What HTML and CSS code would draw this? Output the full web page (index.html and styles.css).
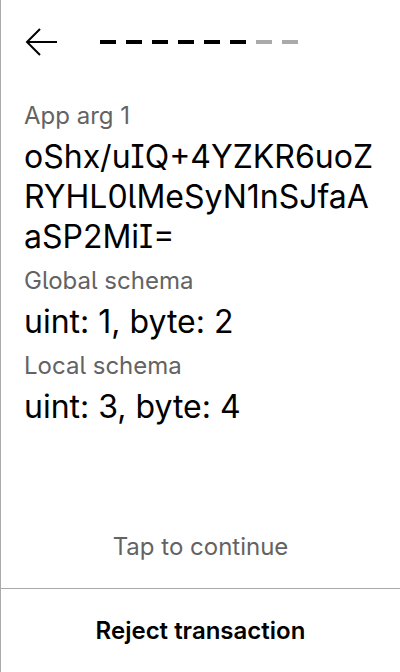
FILE: index.html
```html
<!DOCTYPE html>
<html>
<head>
<meta charset="utf-8">
<link rel="stylesheet" href="styles.css">
</head>
<body>
<div class="screen">
  <header class="top">
    <svg class="back" width="34" height="30" viewBox="0 0 34 30">
      <path d="M33 14H3M16 1L3 14L16 27" fill="none" stroke="#000" stroke-width="2"/>
    </svg>
    <div class="steps">
      <span class="step on"></span><span class="step on"></span><span class="step on"></span><span class="step on"></span><span class="step on"></span><span class="step on"></span><span class="step"></span><span class="step"></span>
    </div>
  </header>
  <main class="content">
    <div class="item">
      <div class="label">App arg 1</div>
      <div class="value wrap">oShx/uIQ+4YZKR6uoZRYHL0lMeSyN1nSJfaAaSP2MiI=</div>
    </div>
    <div class="item">
      <div class="label">Global schema</div>
      <div class="value">uint: 1, byte: 2</div>
    </div>
    <div class="item">
      <div class="label">Local schema</div>
      <div class="value">uint: 3, byte: 4</div>
    </div>
  </main>
  <div class="tap">Tap to continue</div>
  <footer class="bottom">
    <button class="reject">Reject transaction</button>
  </footer>
</div>
</body>
</html>
```
FILE: styles.css
```css
* { box-sizing: border-box; }
html, body { margin: 0; padding: 0; background: #fff; }
body {
  font-family: Inter, "Noto Sans", sans-serif;
  font-feature-settings: "cv05", "cv08";
  color: #000;
}
.screen {
  width: 400px;
  height: 672px;
  border-left: 1px solid #aaa;
  display: flex;
  flex-direction: column;
}
.top {
  display: flex;
  align-items: center;
  height: 86px;
  padding-left: 23px;
  padding-bottom: 1px;
  flex: none;
}
.back { display: block; }
.steps {
  display: flex;
  gap: 10px;
  margin-left: 42px;
  margin-top: -2px;
}
.step { width: 16px; height: 4px; background: #aaa; }
.step.on { background: #000; }
.content {
  padding: 14px 20px 0 23px;
  flex: 1;
  display: flex;
  flex-direction: column;
  gap: 8px;
}
.label {
  font-size: 24px;
  line-height: 32px;
  color: #636363;
}
.value {
  font-size: 32px;
  line-height: 40px;
  padding-top: 5px;
}
.wrap { word-break: break-all; }
.tap {
  text-align: center;
  font-size: 24px;
  line-height: 32px;
  color: #636363;
  padding-bottom: 25px;
  flex: none;
}
.bottom {
  border-top: 1px solid #aaa;
  height: 84px;
  flex: none;
  display: flex;
  align-items: center;
  justify-content: center;
}
.reject {
  border: 0;
  background: none;
  font-family: Inter, "Noto Sans", sans-serif;
  font-size: 24px;
  line-height: 32px;
  font-weight: 600;
  color: #000;
  padding: 0;
}
```
